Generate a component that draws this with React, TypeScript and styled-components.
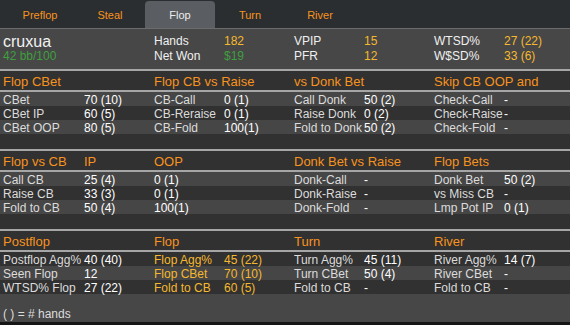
import React from 'react';
import styled, { createGlobalStyle } from 'styled-components';

const GlobalStyle = createGlobalStyle`
  html, body {
    margin: 0;
    padding: 0;
    background: #2b2e31;
    overflow: hidden;
  }
  body {
    font-family: "Liberation Sans", Arial, sans-serif;
  }
`;

const ORANGE = '#f7931e';
const GOLD = '#f5b82e';
const GREEN = '#3f9f3f';
const LINE = '#a6a6a6';
const LIGHT = '#464646';
const DARK = '#313131';

const COLS = '81px repeat(7, 70px)';

const tabs = ['Preflop', 'Steal', 'Flop', 'Turn', 'River'];

type Section = {
  head: string[];
  rows: string[][];
  shades: ('light' | 'dark')[];
  gold?: number[];
};

const sections: Section[] = [
  {
    head: ['Flop CBet', '', 'Flop CB vs Raise', '', 'vs Donk Bet', '', 'Skip CB OOP and', ''],
    rows: [
      ['CBet', '70 (10)', 'CB-Call', '0 (1)', 'Call Donk', '50 (2)', 'Check-Call', '-'],
      ['CBet IP', '60 (5)', 'CB-Reraise', '0 (1)', 'Raise Donk', '0 (2)', 'Check-Raise', '-'],
      ['CBet OOP', '80 (5)', 'CB-Fold', '100(1)', 'Fold to Donk', '50 (2)', 'Check-Fold', '-'],
      [],
    ],
    shades: ['light', 'dark', 'light', 'dark'],
  },
  {
    head: ['Flop vs CB', 'IP', 'OOP', '', 'Donk Bet vs Raise', '', 'Flop Bets', ''],
    rows: [
      ['Call CB', '25 (4)', '0 (1)', '', 'Donk-Call', '-', 'Donk Bet', '50 (2)'],
      ['Raise CB', '33 (3)', '0 (1)', '', 'Donk-Raise', '-', 'vs Miss CB', '-'],
      ['Fold to CB', '50 (4)', '100(1)', '', 'Donk-Fold', '-', 'Lmp Pot IP', '0 (1)'],
      [],
    ],
    shades: ['light', 'dark', 'light', 'dark'],
  },
  {
    head: ['Postflop', '', 'Flop', '', 'Turn', '', 'River', ''],
    rows: [
      ['Postflop Agg%', '40 (40)', 'Flop Agg%', '45 (22)', 'Turn Agg%', '45 (11)', 'River Agg%', '14 (7)'],
      ['Seen Flop', '12', 'Flop CBet', '70 (10)', 'Turn CBet', '50 (4)', 'River CBet', '-'],
      ['WTSD% Flop', '27 (22)', 'Fold to CB', '60 (5)', 'Fold to CB', '-', 'Fold to CB', '-'],
    ],
    shades: ['dark', 'light', 'dark'],
    gold: [2, 3],
  },
];

const cellTone = (text: string, col: number, gold?: number[]) => {
  if (gold && gold.includes(col)) return GOLD;
  return /^[\d-]/.test(text) ? '#ffffff' : '#dcdcdc';
};

export default function App() {
  return (
    <>
      <GlobalStyle />
      <Window>
        <TabBar>
          {tabs.map(t => (
            <Tab key={t} $active={t === 'Flop'}>
              {t}
            </Tab>
          ))}
        </TabBar>

        <Summary>
          <NameCell>cruxua</NameCell>
          <HeadLabel>Hands</HeadLabel>
          <HeadValue $color={GOLD}>182</HeadValue>
          <HeadLabel>VPIP</HeadLabel>
          <HeadValue $color={GOLD}>15</HeadValue>
          <HeadLabel>WTSD%</HeadLabel>
          <HeadValue $color={GOLD}>27 (22)</HeadValue>

          <WinRate>42 bb/100</WinRate>
          <HeadLabel>Net Won</HeadLabel>
          <HeadValue $color={GREEN}>$19</HeadValue>
          <HeadLabel>PFR</HeadLabel>
          <HeadValue $color={GOLD}>12</HeadValue>
          <HeadLabel>W$SD%</HeadLabel>
          <HeadValue $color={GOLD}>33 (6)</HeadValue>
        </Summary>

        {sections.map((s, si) => (
          <Block key={si}>
            <BlockHead>
              {s.head.map((h, i) => (
                <HeadCell key={i}>{h}</HeadCell>
              ))}
            </BlockHead>
            {s.rows.map((r, ri) => (
              <Row key={ri} $shade={s.shades[ri]} $tall={r.length === 0}>
                {r.map((c, ci) => (
                  <Cell key={ci} $color={cellTone(c, ci, s.gold)}>
                    {c}
                  </Cell>
                ))}
              </Row>
            ))}
          </Block>
        ))}

        <Footer>( ) = # hands</Footer>
        <BottomEdge />
      </Window>
    </>
  );
}

const Window = styled.div`
  width: 570px;
  height: 325px;
  overflow: hidden;
  background: ${DARK};
`;

const TabBar = styled.div`
  display: flex;
  align-items: flex-end;
  height: 28px;
  padding-left: 5px;
  background: #2b2e31;
  border-bottom: 1px solid #6c6c6c;
`;

const Tab = styled.div<{ $active?: boolean }>`
  width: 70px;
  height: 27px;
  display: flex;
  align-items: center;
  justify-content: center;
  font-size: 11px;
  color: ${p => (p.$active ? '#ececec' : ORANGE)};
  background: ${p => (p.$active ? '#5a5d61' : 'transparent')};
  border-radius: 4px 4px 0 0;
`;

const Summary = styled.div`
  display: grid;
  grid-template-columns: 151px repeat(6, 70px);
  grid-template-rows: 15px 15px;
  height: 35px;
  padding: 5px 0 0 3px;
  background: #474747;
  font-size: 12px;
  line-height: 15px;
  white-space: nowrap;
`;

const NameCell = styled.div`
  font-size: 16px;
  color: #f2f2f2;
`;

const WinRate = styled.div`
  color: ${GREEN};
`;

const HeadLabel = styled.div`
  color: #f0f0f0;
`;

const HeadValue = styled.div<{ $color: string }>`
  color: ${p => p.$color};
`;

const Block = styled.div`
  border-top: 2px solid ${LINE};
`;

const BlockHead = styled.div`
  display: grid;
  grid-template-columns: ${COLS};
  height: 19px;
  padding-left: 3px;
  background: ${DARK};
  border-bottom: 2px solid ${LINE};
  font-size: 13px;
  line-height: 21px;
  color: ${ORANGE};
  white-space: nowrap;
`;

const HeadCell = styled.div`
  overflow: visible;
`;

const Row = styled.div<{ $shade: 'light' | 'dark'; $tall?: boolean }>`
  display: grid;
  grid-template-columns: ${COLS};
  height: ${p => (p.$tall ? '15px' : '14px')};
  padding-left: 3px;
  background: ${p => (p.$shade === 'light' ? LIGHT : DARK)};
  font-size: 12px;
  line-height: 16px;
  white-space: nowrap;
`;

const Cell = styled.div<{ $color: string }>`
  height: 14px;
  color: ${p => p.$color};
`;

const Footer = styled.div`
  height: 28px;
  box-sizing: border-box;
  padding: 13px 0 0 3px;
  background: #474747;
  font-size: 12px;
  line-height: 14px;
  color: #dcdcdc;
`;

const BottomEdge = styled.div`
  height: 3px;
  background: #161616;
`;
